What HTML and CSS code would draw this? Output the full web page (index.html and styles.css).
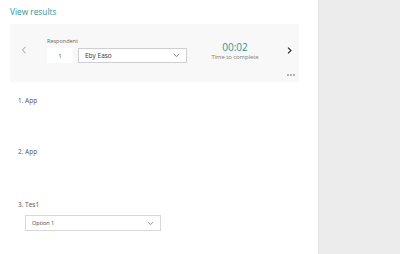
FILE: index.html
```html
<!DOCTYPE html>
<html>
<head>
<meta charset="utf-8">
<link rel="stylesheet" href="styles.css">
</head>
<body>
<div class="page">
  <main class="main">
    <h1 class="title">View results</h1>
    <section class="card">
      <div class="nav prev">
        <svg width="6" height="8" viewBox="0 0 6 8"><path d="M4.5 0.8 L1.5 4 L4.5 7.2" fill="none" stroke="#9a9a9a" stroke-width="1"/></svg>
      </div>
      <div class="respondent">
        <div class="label">Respondent</div>
        <div class="controls">
          <div class="numbox">1</div>
          <div class="select wide">
            <span>Eby Easo</span>
            <svg width="7" height="5" viewBox="0 0 7 5"><path d="M0.8 1 L3.5 3.6 L6.2 1" fill="none" stroke="#777" stroke-width="0.9"/></svg>
          </div>
        </div>
      </div>
      <div class="timer">
        <div class="time">00:02</div>
        <div class="timelabel">Time to complete</div>
      </div>
      <div class="nav next">
        <svg width="5" height="7" viewBox="0 0 5 7"><path d="M1 0.7 L4 3.5 L1 6.3" fill="none" stroke="#222" stroke-width="1.1"/></svg>
      </div>
      <svg class="more" width="8" height="2" viewBox="0 0 8 2"><circle cx="1" cy="1" r="0.7" fill="#333"/><circle cx="4" cy="1" r="0.7" fill="#333"/><circle cx="7" cy="1" r="0.7" fill="#333"/></svg>
    </section>
    <div class="questions">
      <div class="q q1">1. App</div>
      <div class="q q2">2. App</div>
      <div class="q q3">3. Tes1</div>
      <div class="select option">
        <span>Option 1</span>
        <svg width="7" height="5" viewBox="0 0 7 5"><path d="M0.8 1 L3.5 3.6 L6.2 1" fill="none" stroke="#888" stroke-width="0.9"/></svg>
      </div>
    </div>
  </main>
  <aside class="side"></aside>
</div>
</body>
</html>
```
FILE: styles.css
```css
* { box-sizing: border-box; margin: 0; padding: 0; }
html, body { width: 400px; height: 254px; overflow: hidden; }
body { font-family: "Open Sans", "Noto Sans", sans-serif; color: #444; background: #fff; }
.page { display: flex; height: 254px; }
.main { width: 318px; padding: 6px 19px 0 10px; }
.side { flex: 1; background: #ececec; border-left: 1px solid #e2e2e2; }
.title { font-size: 8.3px; font-weight: 400; color: #2f9497; line-height: 12px; height: 18px; }
.card { position: relative; background: #f8f8f8; height: 58px; display: flex; align-items: center; }
.nav { display: flex; align-items: center; justify-content: center; }
.prev { width: 27px; margin-top: -6px; }
.respondent { margin-left: 10px; margin-top: -6px; }
.label { font-size: 5.5px; color: #666; line-height: 8px; margin-bottom: 3px; }
.controls { display: flex; gap: 5px; }
.numbox { width: 26px; height: 15px; background: #fff; font-size: 6px; color: #555; display: flex; align-items: center; justify-content: center; }
.select { background: #fff; border: 1px solid #cfcfcf; display: flex; align-items: center; justify-content: space-between; }
.select span { font-size: 6px; color: #333; }
.wide { width: 109px; height: 15px; padding: 0 6px 0 6px; }
.wide span { font-size: 6.5px; }
.timer { width: 96px; text-align: center; margin-top: -5px; }
.time { font-size: 10px; color: #2f9497; line-height: 12px; }
.timelabel { font-size: 5.8px; color: #777; line-height: 8px; }
.next { width: 12px; margin-top: -5px; }
.more { position: absolute; right: 4px; bottom: 6px; }
.questions { padding-left: 8px; }
.q { font-size: 6.5px; color: #555; line-height: 9px; }
.q1 { margin-top: 14px; }
.q2 { margin-top: 42px; }
.q3 { margin-top: 44px; }
.option { width: 136px; height: 16px; margin-left: 7px; margin-top: 6px; padding: 0 6px 0 6px; border-color: #d8d8d8; }
.option span { font-size: 5.5px; color: #444; }
```
